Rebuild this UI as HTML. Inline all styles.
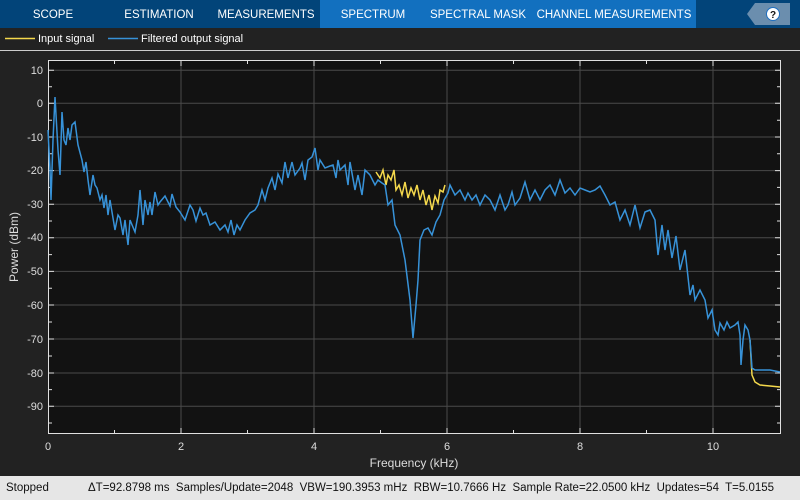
<!DOCTYPE html>
<html><head><meta charset="utf-8"><style>
*{margin:0;padding:0;box-sizing:border-box}
body{width:800px;height:500px;overflow:hidden;background:#222;font-family:"Liberation Sans",Arial,sans-serif;position:relative}
.tabs{position:absolute;left:0;top:0;width:800px;height:28px;background:#024479}
.tab{position:absolute;top:0;height:28px;line-height:30px;color:#fff;font-size:11.5px;text-align:center}
.sel{position:absolute;left:320px;top:0;width:376px;height:28px;background:#1270bf}
.status{position:absolute;left:0;top:476px;width:800px;height:24px;background:#e6e6e6;font-size:11.5px;color:#111;line-height:24px;white-space:nowrap}
</style></head><body>
<div class="tabs">
<div class="sel"></div>
<div class="tab" style="left:0;width:106px">SCOPE</div>
<div class="tab" style="left:110px;width:98px">ESTIMATION</div>
<div class="tab" style="left:216px;width:100px">MEASUREMENTS</div>
<div class="tab" style="left:330px;width:86px">SPECTRUM</div>
<div class="tab" style="left:428px;width:100px">SPECTRAL MASK</div>
<div class="tab" style="left:536px;width:156px">CHANNEL MEASUREMENTS</div>
<svg style="position:absolute;left:740px;top:0" width="60" height="28">
<polygon points="15,3 50,3 50,25 15,25 7,14" fill="#6b8eae"/>
<circle cx="33" cy="14" r="6.5" fill="#fff" stroke="#1f6fc0" stroke-width="1"/>
<text x="33" y="18" font-size="10" font-weight="bold" text-anchor="middle" fill="#111" font-family="Liberation Sans">?</text>
</svg>
</div>
<svg style="position:absolute;left:0;top:28px" width="800" height="448" font-family="Liberation Sans">
<line x1="5" y1="10.5" x2="35" y2="10.5" stroke="#f5d94c" stroke-width="1.5"/>
<text x="38" y="14" font-size="11" fill="#fff">Input signal</text>
<line x1="108" y1="10.5" x2="138" y2="10.5" stroke="#3792d8" stroke-width="1.5"/>
<text x="141" y="14" font-size="11" fill="#fff">Filtered output signal</text>
<line x1="0" y1="22.5" x2="800" y2="22.5" stroke="#ccc" stroke-width="1"/>
</svg>
<svg style="position:absolute;left:0;top:0" width="800" height="476" font-family="Liberation Sans">
<rect x="48.5" y="60.5" width="732" height="373" fill="#121212" stroke="#e0e0e0" stroke-width="1"/>
<g stroke="#4a4a4a" stroke-width="1">
<line x1="181" y1="61" x2="181" y2="433"/><line x1="314" y1="61" x2="314" y2="433"/><line x1="447" y1="61" x2="447" y2="433"/><line x1="580" y1="61" x2="580" y2="433"/><line x1="713" y1="61" x2="713" y2="433"/>
<line x1="49" y1="70.3" x2="780" y2="70.3"/><line x1="49" y1="103.3" x2="780" y2="103.3"/><line x1="49" y1="137" x2="780" y2="137"/><line x1="49" y1="170.6" x2="780" y2="170.6"/><line x1="49" y1="204.2" x2="780" y2="204.2"/><line x1="49" y1="237.8" x2="780" y2="237.8"/><line x1="49" y1="271.4" x2="780" y2="271.4"/><line x1="49" y1="305" x2="780" y2="305"/><line x1="49" y1="339" x2="780" y2="339"/><line x1="49" y1="373" x2="780" y2="373"/><line x1="49" y1="406.3" x2="780" y2="406.3"/>
</g>
<g stroke="#e0e0e0" stroke-width="1">
<path d="M49 70.3h5M49 103.3h5M49 137h5M49 170.6h5M49 204.2h5M49 237.8h5M49 271.4h5M49 305h5M49 339h5M49 373h5M49 406.3h5M49 86.8h3M49 120.2h3M49 153.8h3M49 187.4h3M49 221h3M49 254.6h3M49 288.2h3M49 322h3M49 356h3M49 389.6h3M49 423h3"/>
<path d="M775 70.3h5M775 103.3h5M775 137h5M775 170.6h5M775 204.2h5M775 237.8h5M775 271.4h5M775 305h5M775 339h5M775 373h5M775 406.3h5M777 86.8h3M777 120.2h3M777 153.8h3M777 187.4h3M777 221h3M777 254.6h3M777 288.2h3M777 322h3M777 356h3M777 389.6h3M777 423h3"/>
<path d="M114.5 61v3M181 61v5M247.5 61v3M314 61v5M380.5 61v3M447 61v5M513.5 61v3M580 61v5M646.5 61v3M713 61v5M114.5 433v-3M181 433v-5M247.5 433v-3M314 433v-5M380.5 433v-3M447 433v-5M513.5 433v-3M580 433v-5M646.5 433v-3M713 433v-5"/>
</g>
<g fill="#ddd" font-size="11" text-anchor="end">
<text x="43" y="74">10</text><text x="43" y="107">0</text><text x="43" y="141">-10</text><text x="43" y="174">-20</text><text x="43" y="208">-30</text><text x="43" y="241">-40</text><text x="43" y="275">-50</text><text x="43" y="309">-60</text><text x="43" y="343">-70</text><text x="43" y="377">-80</text><text x="43" y="410">-90</text>
</g>
<g fill="#ddd" font-size="11" text-anchor="middle">
<text x="48" y="450">0</text><text x="181" y="450">2</text><text x="314" y="450">4</text><text x="447" y="450">6</text><text x="580" y="450">8</text><text x="713" y="450">10</text>
<text x="414" y="467" font-size="12">Frequency (kHz)</text>
</g>
<text transform="translate(18,247) rotate(-90)" fill="#ddd" font-size="12" text-anchor="middle">Power (dBm)</text>
<polyline fill="none" stroke="#f5d94c" stroke-width="1.5" points="376,172 380,178 383,170 386,185 388,175 391,180 394,170 396,190 399,185 402,195 405,182 408,198 411,188 414,195 417,185 420,200 423,190 426,205 429,195 432,210 435,196 438,203 440,190 443,192 445,185"/>
<polyline fill="none" stroke="#f5d94c" stroke-width="1.5" points="750,340 752,375 755,382 760,385 770,386 780,387"/>
<polyline fill="none" stroke="#3792d8" stroke-width="1.5" points="48,130 50,170 51,200 53,140 55,97 58,150 60,175 62,112 64,140 66,145 68,128 70,140 72,125 75,122 78,145 82,160 84,172 86,162 88,180 90,195 93,175 95,185 97,188 100,200 102,195 104,208 106,195 108,215 110,200 115,230 118,215 120,218 123,235 125,220 128,245 130,220 135,232 138,215 140,190 143,225 145,200 148,215 150,202 152,215 155,192 158,205 160,202 165,196 170,206 172,194 176,207 180,212 185,220 190,205 193,210 196,221 200,208 203,215 206,213 210,225 215,222 220,230 225,225 228,232 231,220 234,235 237,225 240,230 245,220 250,213 255,210 258,205 262,190 265,200 268,188 272,178 275,190 278,174 282,183 285,162 288,178 292,162 295,175 300,168 302,163 305,180 308,160 312,157 315,148 318,170 320,160 325,168 330,166 333,165 336,178 338,160 340,170 345,165 348,185 350,162 355,190 358,175 362,195 365,170 370,175 375,185 378,180 382,183 385,185 388,205 392,200 395,225 400,235 405,260 410,300 413,338 416,305 418,280 420,240 424,230 428,228 432,235 436,222 440,215 444,200 448,193 450,185 455,195 460,190 465,200 468,193 472,200 476,195 480,205 485,195 490,200 495,210 500,195 505,210 508,205 512,192 515,205 520,198 525,182 530,200 535,190 540,200 545,190 550,185 555,195 560,180 565,193 570,188 575,195 580,188 585,190 590,192 595,190 600,186 605,195 610,205 615,202 620,220 625,210 630,225 635,205 640,228 645,212 650,210 655,220 658,255 662,225 665,250 668,230 672,258 676,236 680,270 685,250 690,295 693,285 695,300 700,290 705,300 708,318 712,310 715,330 718,335 720,323 724,330 727,322 730,328 735,325 738,322 740,335 741,365 743,340 745,325 748,330 750,340 752,368 755,370 760,370 770,370 780,372"/>
</svg>
<div class="status"><span style="position:absolute;left:6px">Stopped</span><span style="position:absolute;left:88px">ΔT=92.8798 ms&nbsp; Samples/Update=2048&nbsp; VBW=190.3953 mHz&nbsp; RBW=10.7666 Hz&nbsp; Sample Rate=22.0500 kHz&nbsp; Updates=54&nbsp; T=5.0155</span></div>
</body></html>
